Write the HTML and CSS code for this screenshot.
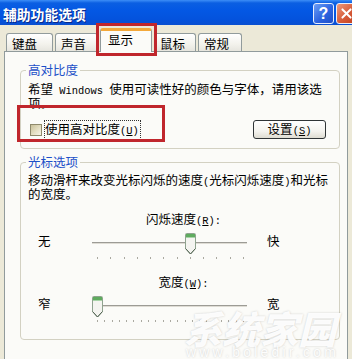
FILE: index.html
```html
<!DOCTYPE html>
<html lang="zh-CN">
<head>
<meta charset="utf-8">
<title>辅助功能选项</title>
<link rel="stylesheet" href="styles.css">
</head>
<body>
<div class="window">
  <div class="titlebar">
    <span class="title">辅助功能选项</span>
    <div class="cap-buttons">
      <span class="cap-btn cap-help">?</span>
      <span class="cap-btn cap-close"><svg width="21" height="21" viewBox="0 0 21 21"><path d="M6 6L15 15M15 6L6 15" stroke="#fff" stroke-width="2.2" stroke-linecap="round"/></svg></span>
    </div>
  </div>
  <div class="client">
    <div class="tabs">
      <div class="tab tab-w1">键盘</div>
      <div class="tab tab-w2">声音</div>
      <div class="tab tab-active">显示</div>
      <div class="tab tab-w4">鼠标</div>
      <div class="tab tab-w5">常规</div>
    </div>
    <div class="panel">
      <section class="group group-contrast">
        <div class="legend">高对比度</div>
        <p class="desc">希望<span class="half"> Windows </span>使用可读性好的颜色与字体，请用该选项。</p>
        <div class="check-row">
          <label class="check"><span class="box"></span><span class="focus">使用高对比度<span class="half">(<u>U</u>)</span></span></label>
          <button class="btn">设置<span class="half">(<u>S</u>)</span></button>
        </div>
      </section>
      <section class="group group-cursor">
        <div class="legend">光标选项</div>
        <p class="desc">移动滑杆来改变光标闪烁的速度<span class="half">(</span>光标闪烁速度<span class="half">)</span>和光标的宽度。</p>
        <div class="caption">闪烁速度<span class="half">(<u>R</u>):</span></div>
        <div class="slider-row">
          <span class="end-l">无</span>
          <div class="slider">
            <div class="track"></div>
            <div class="ticks"><i></i><i></i><i></i><i></i><i></i><i></i><i></i><i></i><i></i><i></i><i></i><i></i></div>
            <svg class="thumb" style="left:94px" width="11" height="22" viewBox="0 0 11 22"><path d="M1.5 0.5h8a1 1 0 0 1 1 1v14l-5 5.5-5-5.5v-14a1 1 0 0 1 1-1z" fill="#f4f4f0" stroke="#8fa38f"/><path d="M10.5 15.5l-5 5.5-5-5.5" fill="none" stroke="#4d5f4d"/><rect x="1" y="1" width="9" height="3" fill="#5fab5f"/><rect x="1" y="4" width="9" height="1" fill="#a8d3a8"/></svg>
          </div>
          <span class="end-r">快</span>
        </div>
        <div class="caption caption-gap">宽度<span class="half">(<u>W</u>):</span></div>
        <div class="slider-row">
          <span class="end-l">窄</span>
          <div class="slider">
            <div class="track"></div>
            <div class="ticks"><i></i><i></i><i></i><i></i><i></i><i></i><i></i><i></i><i></i><i></i><i></i><i></i><i></i><i></i><i></i><i></i><i></i><i></i><i></i><i></i><i></i></div>
            <svg class="thumb" style="left:1px" width="11" height="22" viewBox="0 0 11 22"><path d="M1.5 0.5h8a1 1 0 0 1 1 1v14l-5 5.5-5-5.5v-14a1 1 0 0 1 1-1z" fill="#f4f4f0" stroke="#8fa38f"/><path d="M10.5 15.5l-5 5.5-5-5.5" fill="none" stroke="#4d5f4d"/><rect x="1" y="1" width="9" height="3" fill="#5fab5f"/><rect x="1" y="4" width="9" height="1" fill="#a8d3a8"/></svg>
          </div>
          <span class="end-r">宽</span>
        </div>
      </section>
    </div>
  </div>
  <div class="mark mark-tab"></div>
  <div class="mark mark-check"></div>
  <div class="watermark">
    <div class="wm-cn">系统家园</div>
    <div class="wm-url">www.boledir.com</div>
  </div>
</div>
</body>
</html>
```

FILE: styles.css
```css
html, body {
  margin: 0;
  padding: 0;
}
body {
  width: 352px;
  height: 359px;
  overflow: hidden;
  background: #ece9d8;
  font-family: "Noto Sans CJK SC", "Noto Sans CJK JP", sans-serif;
  font-size: 12.5px;
  line-height: 13px;
  color: #000;
}
.window {
  position: relative;
  height: 359px;
  display: flex;
  flex-direction: column;
}
.titlebar {
  height: 25px;
  box-sizing: border-box;
  padding-top: 2px;
  display: flex;
  align-items: center;
  background: linear-gradient(#3d8ef7 0, #0b5fe2 3px, #0458e4 40%, #0452dc 80%, #0a4fd0 100%);
}
.title {
  flex: 1;
  padding-left: 3px;
  color: #fff;
  font-weight: 700;
  font-size: 13.8px;
  line-height: 16px;
  text-shadow: 1px 1px 0 #0a2a8a;
}
.cap-buttons {
  display: flex;
  gap: 2px;
  margin-right: -5px;
}
.cap-btn {
  box-sizing: border-box;
  width: 21px;
  height: 21px;
  border: 1px solid #e8eefc;
  border-radius: 3px;
  display: flex;
  align-items: center;
  justify-content: center;
}
.cap-help {
  background: linear-gradient(135deg, #6b9ef5, #2d64e0 55%, #1f4fc8);
  color: #fff;
  font-family: "Liberation Sans", sans-serif;
  font-weight: 700;
  font-size: 16px;
}
.cap-close {
  background: linear-gradient(135deg, #ee9a7c, #d65a38 55%, #c2401e);
}
.client {
  flex: 1;
  display: flex;
  flex-direction: column;
  padding: 3px 4px 0 4px;
}
.tabs {
  position: relative;
  z-index: 1;
  height: 24px;
  margin-bottom: -1px;
  padding-left: 2px;
  display: flex;
  align-items: flex-end;
  gap: 2px;
}
.tab {
  box-sizing: border-box;
  height: 18px;
  margin-bottom: 1px;
  border: 1px solid #919b9c;
  border-bottom: 0;
  border-radius: 3px 3px 0 0;
  background: linear-gradient(#ffffff, #f3f2ec 60%, #e6e5de);
  padding: 3px 0 0 5px;
  line-height: 14px;
}
.tab-w1 { width: 47px; }
.tab-w2 { width: 43px; }
.tab-w4 { width: 42px; }
.tab-w5 { width: 44px; }
.tab-active {
  width: 52px;
  height: 24px;
  margin-bottom: 0;
  border-top: 3px solid #f3a83a;
  padding: 2px 0 0 7px;
  background: #fbfbf8;
}
.panel {
  flex: 1;
  border: 1px solid #919b9c;
  border-bottom: 0;
  background: #fbfbf8;
  padding: 0 7px 0 15px;
}
.group {
  border: 1px solid #d3d1c2;
  border-radius: 4px;
  padding: 0 8px 9px 7px;
}
.group-contrast {
  margin-top: 18px;
}
.group-cursor {
  margin-top: 13px;
  padding-bottom: 17px;
}
.legend {
  display: table;
  margin: -8px 0 0 -2px;
  padding: 0 2px;
  background: #fbfbf8;
  color: #1d50c8;
  line-height: 14px;
}
.desc {
  margin: 6px 0 0 0;
  line-height: 11px;
}
.group-cursor .desc {
  margin-top: 5px;
}
.half {
  font-family: "Liberation Mono", monospace;
  font-size: 10.4px;
}
.check-row {
  margin-top: 12px;
  height: 19px;
  display: flex;
  align-items: center;
  justify-content: space-between;
  padding-right: 5px;
}
.check {
  display: flex;
  align-items: center;
  padding-left: 2px;
}
.box {
  box-sizing: border-box;
  width: 12px;
  height: 12px;
  border: 1px solid #8f8a6c;
  background: linear-gradient(135deg, #c8c09a, #e3ddc0 50%, #f6f3e6);
  margin-right: 2px;
}
.focus {
  border: 1px dotted #333;
  padding: 1px 1px 1px 0;
  line-height: 13px;
}
.btn {
  box-sizing: border-box;
  width: 73px;
  height: 19px;
  padding: 0;
  border: 1px solid #2f3436;
  border-radius: 3px;
  background: linear-gradient(#ffffff, #f4f3ee 60%, #dedcd2);
  font: inherit;
  line-height: 15px;
  color: #000;
}
.caption {
  margin-top: 13px;
  padding-left: 8px;
  text-align: center;
}
.caption-gap {
  margin-top: 16px;
}
.slider-row {
  margin-top: 5px;
  display: grid;
  grid-template-columns: 63px 158px 1fr;
  align-items: start;
}
.end-l {
  padding-left: 10px;
  padding-top: 1px;
}
.end-r {
  padding-left: 18px;
  padding-top: 1px;
}
.slider {
  position: relative;
  height: 26px;
}
.track {
  margin: 9px 2px 0 1px;
  height: 0;
  border-top: 1px solid #9c9b95;
  border-bottom: 1px solid #dedcd4;
}
.ticks {
  margin-top: 13px;
  padding: 0 5px 0 6px;
  display: flex;
  justify-content: space-between;
}
.ticks i {
  display: block;
  width: 1px;
  height: 2px;
  background: #aaa9a0;
}
.thumb {
  position: absolute;
  top: 0;
}
.mark {
  position: absolute;
  box-sizing: border-box;
  border: 3px solid #c0262c;
  z-index: 5;
}
.mark-tab {
  left: 96px;
  top: 23px;
  width: 61px;
  height: 33px;
}
.mark-check {
  left: 17px;
  top: 105px;
  width: 148px;
  height: 37px;
}
.watermark {
  position: absolute;
  left: 184px;
  top: 310px;
  z-index: 4;
  color: rgba(255, 255, 255, 0.95);
  text-shadow: 0 0 2px rgba(90, 90, 90, 0.3);
}
.wm-cn {
  font-family: "Noto Sans CJK SC", sans-serif;
  font-weight: 900;
  font-style: italic;
  font-size: 38px;
  line-height: 36px;
  letter-spacing: 0;
}
.wm-url {
  font-family: "Liberation Sans", sans-serif;
  font-size: 14px;
  line-height: 12px;
  letter-spacing: 3.2px;
  padding-left: 2px;
}
```
